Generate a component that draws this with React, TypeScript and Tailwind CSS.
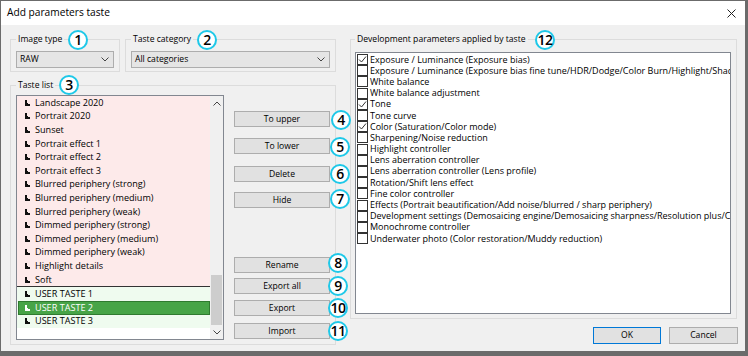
import React from 'react';

// Presets shipped with the app (pink) and user-made tastes (green)
const presetTastes = [
  'Landscape 2020',
  'Portrait 2020',
  'Sunset',
  'Portrait effect 1',
  'Portrait effect 2',
  'Portrait effect 3',
  'Blurred periphery (strong)',
  'Blurred periphery (medium)',
  'Blurred periphery (weak)',
  'Dimmed periphery (strong)',
  'Dimmed periphery (medium)',
  'Dimmed periphery (weak)',
  'Highlight details',
  'Soft',
];

const userTastes = ['USER TASTE 1', 'USER TASTE 2', 'USER TASTE 3'];

const parameters: { label: string; checked: boolean }[] = [
  { label: 'Exposure / Luminance (Exposure bias)', checked: true },
  { label: 'Exposure / Luminance (Exposure bias fine tune/HDR/Dodge/Color Burn/Highlight/Shadow)', checked: false },
  { label: 'White balance', checked: false },
  { label: 'White balance adjustment', checked: false },
  { label: 'Tone', checked: true },
  { label: 'Tone curve', checked: false },
  { label: 'Color (Saturation/Color mode)', checked: true },
  { label: 'Sharpening/Noise reduction', checked: false },
  { label: 'Highlight controller', checked: false },
  { label: 'Lens aberration controller', checked: false },
  { label: 'Lens aberration controller (Lens profile)', checked: false },
  { label: 'Rotation/Shift lens effect', checked: false },
  { label: 'Fine color controller', checked: false },
  { label: 'Effects (Portrait beautification/Add noise/blurred / sharp periphery)', checked: false },
  { label: 'Development settings (Demosaicing engine/Demosaicing sharpness/Resolution plus/Color space)', checked: false },
  { label: 'Monochrome controller', checked: false },
  { label: 'Underwater photo (Color restoration/Muddy reduction)', checked: false },
];

function Chevron({ up = false }: { up?: boolean }) {
  return (
    <svg width="8" height="5" viewBox="0 0 8 5" className="shrink-0">
      <polyline
        points={up ? '0.5,4.5 4,1 7.5,4.5' : '0.5,0.5 4,4 7.5,0.5'}
        fill="none"
        stroke="#444"
        strokeWidth="1"
      />
    </svg>
  );
}

function TasteIcon({ color }: { color: string }) {
  return (
    <svg width="5" height="6" viewBox="0 0 5 6" className="shrink-0">
      <rect x="0" y="0" width="2" height="6" fill={color} />
      <rect x="0" y="3" width="3" height="3" fill={color} />
      <rect x="0" y="4" width="5" height="2" fill={color} />
    </svg>
  );
}

function Dropdown({ value, width }: { value: string; width: string }) {
  return (
    <div
      className={`${width} h-[17px] flex items-center justify-between pl-[3px] pr-[4px] bg-[#e5e5e5] border border-[#adadad]`}
    >
      <span>{value}</span>
      <Chevron />
    </div>
  );
}

function Button({ label, className = '' }: { label: string; className?: string }) {
  return (
    <div
      className={`w-[96px] h-[16px] flex items-center justify-center bg-[#e1e1e1] border border-[#adadad] ${className}`}
    >
      {label}
    </div>
  );
}

function Badge({ n, className }: { n: string; className: string }) {
  return (
    <div
      className={`absolute w-[20px] h-[20px] rounded-full border-2 border-[#1ec8e8] bg-white flex items-center justify-center text-[14px] leading-none font-semibold tracking-[-0.5px] text-black ${className}`}
    >
      {n}
    </div>
  );
}

export default function App() {
  return (
    <div className="relative w-[748px] h-[356px] bg-[#6b6b6b] pt-px pl-px font-['Open_Sans',sans-serif] text-[8.6px] text-black">
      <div className="w-[744px] h-[350px] bg-[#f0f0f0] flex flex-col overflow-hidden">
        {/* Title bar */}
        <div className="h-[24px] bg-white flex items-center justify-between pl-[6px] pr-[9px] text-[10.2px]">
          <span>Add parameters taste</span>
          <svg width="9" height="9" viewBox="0 0 9 9">
            <path d="M0.5 0.5 L8.5 8.5 M8.5 0.5 L0.5 8.5" stroke="#222" strokeWidth="1" />
          </svg>
        </div>

        {/* Body */}
        <div className="flex-1 flex pt-[8px] pl-[9px] gap-[14px]">
          {/* Left column */}
          <div className="w-[326px] flex flex-col gap-[7px]">
            <div className="flex gap-[5px]">
              <fieldset className="w-[110px] min-w-0 border border-[#dcdcdc] px-[5px] pt-[6px] pb-[3px]">
                <legend className="px-[2px] leading-[12px]">Image type</legend>
                <Dropdown value="RAW" width="w-[98px]" />
              </fieldset>
              <fieldset className="w-[211px] min-w-0 border border-[#dcdcdc] px-[5px] pt-[6px] pb-[3px]">
                <legend className="px-[2px] leading-[12px]">Taste category</legend>
                <Dropdown value="All categories" width="w-[199px]" />
              </fieldset>
            </div>

            <fieldset className="h-[266px] min-w-0 border border-[#dcdcdc] px-[5px] pt-[4px] pb-[5px]">
              <legend className="px-[2px] leading-[12px]">Taste list</legend>
              <div className="flex gap-[10px] h-full">
                {/* Taste listbox */}
                <div className="w-[208px] h-[245px] border border-[#828790] bg-white flex text-[9.1px] leading-[12px]">
                  <div className="flex-1 flex flex-col">
                    <div className="bg-[#fdeaea] border-b border-[#333]">
                      {presetTastes.map((t) => (
                        <div key={t} className="h-[13.6px] flex items-center gap-[5px] pl-[8px] whitespace-nowrap">
                          <TasteIcon color="#111" />
                          <span>{t}</span>
                        </div>
                      ))}
                    </div>
                    <div className="bg-[#effbef]">
                      {userTastes.map((t) => {
                        const selected = t === 'USER TASTE 2';
                        return (
                          <div
                            key={t}
                            className={`h-[13.6px] flex items-center gap-[5px] whitespace-nowrap ${
                              selected
                                ? 'ml-px bg-[#47a447] border border-[#2f7a2f] pl-[6px] text-white'
                                : 'pl-[8px]'
                            }`}
                          >
                            <TasteIcon color={selected ? '#fff' : '#111'} />
                            <span>{t}</span>
                          </div>
                        );
                      })}
                    </div>
                  </div>
                  {/* Scrollbar */}
                  <div className="w-[13px] bg-[#f0f0f0] flex flex-col items-center">
                    <div className="h-[14px] flex items-center justify-center">
                      <Chevron up />
                    </div>
                    <div className="flex-1 w-full flex flex-col justify-end px-px">
                      <div className="h-[50px] bg-[#cdcdcd]" />
                    </div>
                    <div className="h-[14px] flex items-center justify-center">
                      <Chevron />
                    </div>
                  </div>
                </div>

                {/* Action buttons */}
                <div className="flex flex-col pt-[16px]">
                  <Button label="To upper" />
                  <Button label="To lower" className="mt-[11px]" />
                  <Button label="Delete" className="mt-[12px]" />
                  <Button label="Hide" className="mt-[10px]" />
                  <Button label="Rename" className="mt-[49px]" />
                  <Button label="Export all" className="mt-[5px]" />
                  <Button label="Export" className="mt-[6px]" />
                  <Button label="Import" className="mt-[7px]" />
                </div>
              </div>
            </fieldset>
          </div>

          {/* Right column */}
          <div className="w-[388px] min-w-0 flex flex-col">
            <fieldset className="w-[387px] min-w-0 border border-[#dcdcdc] pl-[4px] pr-[5px] pt-[7px] pb-[4px]">
              <legend className="px-[2px] leading-[12px]">
                Development parameters applied by taste
              </legend>
              <div className="w-[376px] h-[262px] border border-[#828790] bg-white pt-[1px] overflow-hidden text-[9px] leading-[10px]">
                {parameters.map((p) => (
                  <div key={p.label} className="w-full h-[11.2px] flex items-center gap-[2px] pl-px whitespace-nowrap overflow-hidden">
                    <div className="w-[11px] h-[11px] shrink-0 border border-[#333] bg-white flex items-center justify-center">
                      {p.checked && (
                        <svg width="9" height="9" viewBox="0 0 9 9">
                          <polyline points="1,4.5 3.5,7 8,1.5" fill="none" stroke="#333" strokeWidth="1" />
                        </svg>
                      )}
                    </div>
                    <span>{p.label}</span>
                  </div>
                ))}
              </div>
            </fieldset>
            <div className="w-[387px] flex justify-end gap-[8px] mt-[8px]">
              <div className="w-[68px] h-[17px] flex items-center justify-center bg-[#e1e1e1] border border-[#0078d7]">
                OK
              </div>
              <div className="w-[69px] h-[17px] -mr-px flex items-center justify-center bg-[#e1e1e1] border border-[#adadad]">
                Cancel
              </div>
            </div>
          </div>
        </div>
      </div>

      {/* Callout numbers */}
      <Badge n="1" className="left-[68px] top-[30px]" />
      <Badge n="2" className="left-[197px] top-[30px]" />
      <Badge n="3" className="left-[59px] top-[75px]" />
      <Badge n="4" className="left-[331px] top-[110px]" />
      <Badge n="5" className="left-[330px] top-[137px]" />
      <Badge n="6" className="left-[330px] top-[164px]" />
      <Badge n="7" className="left-[330px] top-[189px]" />
      <Badge n="8" className="left-[328px] top-[253px]" />
      <Badge n="9" className="left-[328px] top-[276px]" />
      <Badge n="10" className="left-[328px] top-[298px]" />
      <Badge n="11" className="left-[328px] top-[321px]" />
      <Badge n="12" className="left-[535px] top-[30px]" />
    </div>
  );
}
